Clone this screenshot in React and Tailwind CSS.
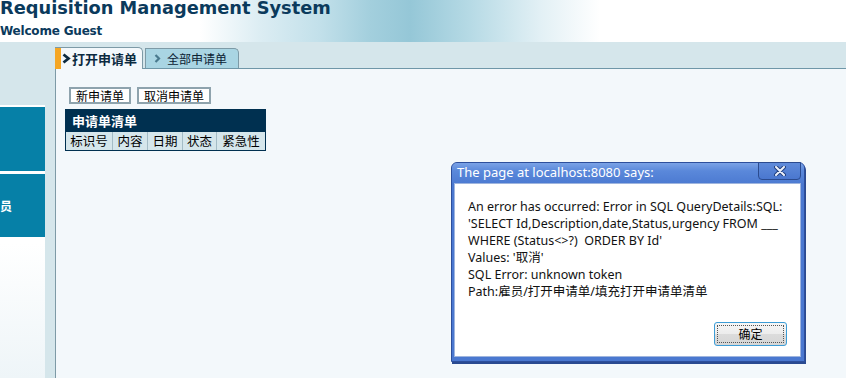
export default function App() {
  const cols = [
    { t: "标识号", w: "w-[47px]" },
    { t: "内容", w: "w-[35px]" },
    { t: "日期", w: "w-[35px]" },
    { t: "状态", w: "w-[34px]" },
    { t: "紧急性", w: "w-[48px]" },
  ];
  return (
    <div className="relative w-[846px] h-[378px] overflow-hidden flex flex-col bg-[#f3f8fb] font-['Noto_Sans_CJK_SC',sans-serif]">
      <header className="h-[42px] shrink-0 overflow-hidden bg-[linear-gradient(90deg,#ffffff_0px,#ffffff_200px,#dcedf3_260px,#c2e0ea_320px,#a3cfdd_370px,#95c7d7_410px,#b6dae5_470px,#e2f0f5_540px,#ffffff_600px)] font-['DejaVu_Sans',sans-serif] text-[#0b3a5c] font-bold">
        <div className="text-[17.8px] leading-[16px] whitespace-nowrap">Requisition Management System</div>
        <div className="text-[12px] leading-[14px] mt-[8px] whitespace-nowrap tracking-[-0.2px]">Welcome Guest</div>
      </header>

      <div className="flex flex-1 min-h-0">
        <aside className="w-[45px] shrink-0 flex flex-col bg-[linear-gradient(180deg,#ffffff_60%,#eef5f8)]">
          <div className="h-[63px] bg-[#d5e6eb]" />
          <div className="h-[2px] bg-white" />
          <div className="h-[64px] bg-[#0680a7]" />
          <div className="h-[3px] bg-white" />
          <div className="h-[63px] bg-[#0680a7] flex items-center overflow-hidden">
            <span className="ml-[-12px] text-white font-bold text-[12px] leading-[14px] whitespace-nowrap">雇员</span>
          </div>
        </aside>
        <div className="w-[10px] shrink-0 bg-[#d5e6eb]" />

        <main className="flex-1 flex flex-col min-w-0">
          <div className="h-[27px] shrink-0 bg-[#d5e6eb] border-b border-[#6f97a8] flex items-end">
            <div className="relative z-10 mb-[-1px] h-[22px] w-[88px] flex bg-[#f3f8fb] border-t border-r border-[#7d9aa6] rounded-tr-[5px]">
              <div className="w-[6px] bg-[#f5a623]" />
              <div className="flex items-center pl-[1px]">
                <svg width="9" height="11" viewBox="0 0 9 11" className="mr-[1px]">
                  <polyline points="1.5,1.5 6.5,5.5 1.5,9.5" fill="none" stroke="#0b2a40" strokeWidth="2.8" />
                </svg>
                <span className="text-[13px] leading-[16px] font-bold text-[#0b2a40] whitespace-nowrap">打开申请单</span>
              </div>
            </div>
            <div className="ml-[2px] h-[20px] w-[94px] flex items-center bg-[#a9d5e3] border border-b-0 border-[#7d9aa6] rounded-tr-[5px] pl-[8px]">
              <svg width="7" height="9" viewBox="0 0 7 9" className="mr-[6px]">
                <polyline points="1.5,1 5,4.5 1.5,8" fill="none" stroke="#4a7a8e" strokeWidth="2.2" />
              </svg>
              <span className="text-[12px] leading-[14px] text-[#0b2233] whitespace-nowrap">全部申请单</span>
            </div>
          </div>

          <div className="flex-1 border-l border-[#7d9aa6] pl-[9px] pt-[18px]">
            <div className="flex gap-[6px] ml-[4px]">
              <button className="h-[17px] px-[5px] border-2 border-[#8ea3ad] bg-white text-[12px] leading-[12px] text-black whitespace-nowrap">新申请单</button>
              <button className="h-[17px] px-[5px] border-2 border-[#8ea3ad] bg-white text-[12px] leading-[12px] text-black whitespace-nowrap">取消申请单</button>
            </div>
            <div className="mt-[5px] w-[201px] border-x border-b border-[#003050]">
              <div className="h-[23px] bg-[#003050] text-white font-bold text-[13px] pl-[6px] flex items-center">申请单清单</div>
              <div className="h-[18px] flex bg-[#d5e6eb] text-[12.5px] text-black">
                {cols.map((c, i) => (
                  <div key={i} className={`${c.w} flex items-center justify-center leading-[14px] ${i < cols.length - 1 ? "border-r border-[#a4bcc6]" : ""}`}>
                    {c.t}
                  </div>
                ))}
              </div>
            </div>
          </div>
        </main>
      </div>

      {/* alert dialog */}
      <div className="absolute left-[451px] top-[162px] w-[354px] h-[200px] flex flex-col rounded-t-[6px] border border-[#2d4f9c] bg-[#4a78d0] shadow-[1px_2px_0_#2a4a90]">
        <div className="h-[20px] shrink-0 flex items-start justify-between rounded-t-[5px] bg-[linear-gradient(180deg,#7aa2e6_0%,#5a88da_40%,#4d7bd2_100%)]">
          <span className="pl-[5px] pt-[1px] text-white text-[13px] leading-[17px] font-['Noto_Sans',sans-serif] whitespace-nowrap">The page at localhost:8080 says:</span>
          <div className="mt-[-1px] mr-[3px] w-[43px] h-[18px] flex items-center justify-center rounded-b-[4px] border border-[#2b4b8f] bg-[linear-gradient(180deg,#5f8bda,#4a77cf)]">
            <svg width="12" height="10" viewBox="0 0 12 10">
              <path d="M2 1 L10 9 M10 1 L2 9" stroke="#22407e" strokeWidth="4" strokeLinecap="round" />
              <path d="M2 1 L10 9 M10 1 L2 9" stroke="#eef2fb" strokeWidth="2" strokeLinecap="round" />
            </svg>
          </div>
        </div>
        <div className="flex-1 ml-[2px] mr-[3px] mb-[4px] bg-white border border-[#9fb5de] flex flex-col font-['Noto_Sans','Noto_Sans_CJK_SC',sans-serif] text-[12.5px] leading-[17px] text-[#111]">
          <div className="pl-[13px] pt-[14px] whitespace-pre">
            <div>An error has occurred: Error in SQL QueryDetails:SQL:</div>
            <div>'SELECT Id,Description,date,Status,urgency FROM ___</div>
            <div>WHERE (Status&lt;&gt;?)  ORDER BY Id'</div>
            <div>Values: '取消'</div>
            <div>SQL Error: unknown token</div>
            <div>Path:雇员/打开申请单/填充打开申请单清单</div>
          </div>
          <div className="flex-1" />
          <div className="flex justify-end pr-[13px] pb-[10px]">
            <button className="w-[73px] h-[24px] rounded-[3px] border border-[#3c9cd6] bg-[linear-gradient(180deg,#f6f6f6_0%,#ececec_50%,#dcdcdc_51%,#d6d6d6_100%)] p-[2px]">
              <div className="w-full h-full border border-dotted border-[#555] flex items-center justify-center text-[12px] leading-[14px] text-black font-['Noto_Sans_CJK_SC',sans-serif]">确定</div>
            </button>
          </div>
        </div>
      </div>
    </div>
  );
}
